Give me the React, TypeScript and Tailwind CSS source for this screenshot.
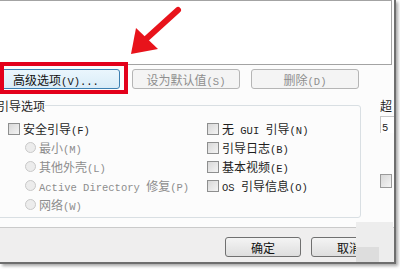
import React from "react";

const cjk = /[\u3000-\u9fff\uff00-\uffef]+/g;

// CJK runs in a sans face, the Latin bits in a narrow mono, like the old dialog font
function Label({ text }: { text: string }) {
  const parts: { t: string; c: boolean }[] = [];
  let last = 0;
  for (const m of text.matchAll(cjk)) {
    if (m.index! > last) parts.push({ t: text.slice(last, m.index), c: false });
    parts.push({ t: m[0], c: true });
    last = m.index! + m[0].length;
  }
  if (last < text.length) parts.push({ t: text.slice(last), c: false });
  return (
    <span className="whitespace-pre">
      {parts.map((p, i) =>
        p.c ? (
          <span key={i} className="text-[12px] [font-family:'Noto_Sans_CJK_SC',sans-serif]">
            {p.t}
          </span>
        ) : (
          <span key={i} className="text-[10.5px] [font-family:'Liberation_Mono',monospace]">
            {p.t}
          </span>
        )
      )}
    </span>
  );
}

function Check({ text }: { text: string }) {
  return (
    <div className="flex h-[19px] items-center gap-[3px] text-[#1e1e1e]">
      <span className="h-[12px] w-[12px] border border-[#8e8f8f] bg-gradient-to-br from-[#d8d8d8] to-[#f4f4f4]" />
      <Label text={text} />
    </div>
  );
}

function Radio({ text }: { text: string }) {
  return (
    <div className="flex h-[19px] items-center gap-[3px] pl-[17px] text-[#8d8d8d]">
      <span className="h-[11px] w-[11px] rounded-full border border-[#c9c9c9] bg-[#ececec]" />
      <Label text={text} />
    </div>
  );
}

export default function App() {
  return (
    <div className="relative h-[269px] w-[400px] overflow-hidden bg-white leading-none">
      <div className="flex h-[264px] w-[396px] flex-col border-b-2 border-r-2 border-[#6e6e6e] bg-[#fcfcfc] shadow-[2px_2px_3px_rgba(0,0,0,0.35)]">
        {/* list area */}
        <div className="mr-[2px] h-[65px] border-b border-r border-t border-[#a3a3a3] bg-white" />

        {/* action buttons */}
        <div className="mt-[4px] flex h-[20px]">
          <div className="ml-[-8px] flex w-[128px] items-center justify-center rounded-[3px] border border-[#3c7fb1] bg-gradient-to-b from-[#eaf6fd] to-[#d9ecf8] text-[#111]">
            <Label text="高级选项(V)..." />
          </div>
          <div className="ml-[12px] flex w-[108px] items-center justify-center rounded-[3px] border border-[#b5b5b5] bg-[#f4f4f4] text-[#8e8e8e]">
            <Label text="设为默认值(S)" />
          </div>
          <div className="ml-[11px] flex w-[108px] items-center justify-center rounded-[3px] border border-[#b5b5b5] bg-[#f4f4f4] text-[#8e8e8e]">
            <Label text="删除(D)" />
          </div>
        </div>

        {/* boot options */}
        <div className="mt-[8px] flex">
          <fieldset className="ml-[-10px] h-[121px] w-[372px] rounded-[3px] border border-[#d9dfe3] pt-[6px]">
            <legend className="ml-[6px] h-[16px] text-[#1e1e1e]">
              <Label text="引导选项" />
            </legend>
            <div className="flex pl-[17px]">
              <div className="w-[199px]">
                <Check text="安全引导(F)" />
                <Radio text="最小(M)" />
                <Radio text="其他外壳(L)" />
                <Radio text="Active Directory 修复(P)" />
                <Radio text="网络(W)" />
              </div>
              <div>
                <Check text="无 GUI 引导(N)" />
                <Check text="引导日志(B)" />
                <Check text="基本视频(E)" />
                <Check text="OS 引导信息(O)" />
              </div>
            </div>
          </fieldset>
          <div className="ml-[19px] flex flex-col text-[#1e1e1e]">
            <div className="h-[16px]">
              <Label text="超" />
            </div>
            <div className="mt-[3px] flex h-[17px] w-[14px] items-center border-l border-t border-[#c8c8c8] bg-white pl-[1px]">
              <Label text="5" />
            </div>
            <div className="mt-[41px] h-[14px] w-[12px] border border-[#9a9a9a] bg-gradient-to-br from-[#d8d8d8] to-[#f4f4f4]" />
          </div>
        </div>

        <div className="flex-1" />

        {/* footer */}
        <div className="flex h-[35px] justify-end gap-[10px] border-t border-[#cacaca] bg-[#efeeee] pr-[7px] pt-[9px]">
          <div className="flex h-[20px] w-[76px] items-center justify-center rounded-[3px] border border-[#707070] bg-gradient-to-b from-[#f4f4f4] to-[#dedede] text-[#111]">
            <Label text="确定" />
          </div>
          <div className="flex h-[20px] w-[76px] items-center justify-center rounded-[3px] border border-[#707070] bg-gradient-to-b from-[#f4f4f4] to-[#dedede] text-[#111]">
            <Label text="取消" />
          </div>
        </div>
      </div>

      {/* blurred patch over the cancel button */}
      <div className="absolute left-[356px] top-[222px] flex h-[40px] w-[37px] flex-col bg-[#ededed]">
        <div className="flex-1" />
        <div className="h-[15px] w-[23px] bg-[#dddddd]" />
      </div>

      {/* annotation: red frame and arrow */}
      <div className="absolute left-0 top-[62px] h-[32px] w-[128px] border-4 border-[#e3001b]" />
      <svg className="absolute left-0 top-0" width="400" height="269" viewBox="0 0 400 269">
        <line x1="178" y1="10" x2="146" y2="39" stroke="#e8131b" strokeWidth="6" strokeLinecap="round" />
        <polygon points="131,54 136,28 158,49" fill="#e8131b" />
      </svg>
    </div>
  );
}
